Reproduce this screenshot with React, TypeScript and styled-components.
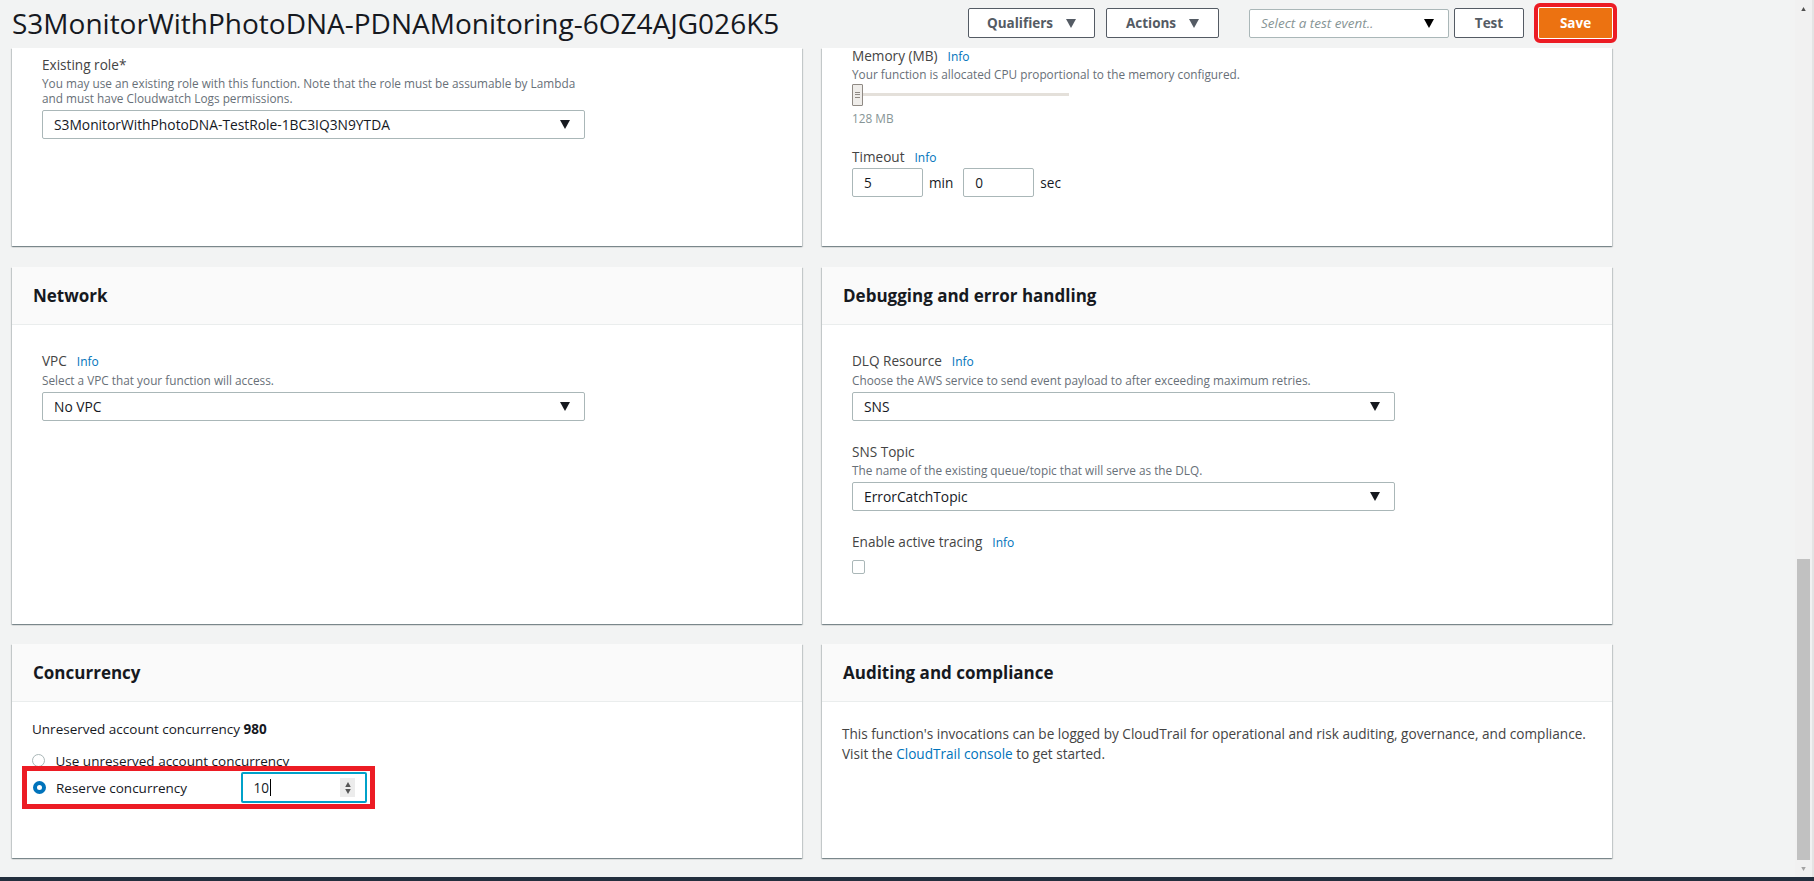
import React from "react";
import styled, { createGlobalStyle } from "styled-components";

const GlobalStyle = createGlobalStyle`
  html, body { margin: 0; padding: 0; }
  body {
    background: #f2f3f3;
    font-family: "Open Sans", "Noto Sans", "Liberation Sans", sans-serif;
    color: #16191f;
    overflow: hidden;
  }
  * { box-sizing: border-box; }
`;

/* ---------- frame ---------- */
const Frame = styled.div`
  width: 1814px;
  height: 881px;
  display: flex;
  flex-direction: column;
`;
const Viewport = styled.div`
  flex: 1;
  min-height: 0;
  display: flex;
`;
const Main = styled.main`
  flex: 1;
  display: flex;
  flex-direction: column;
  padding-left: 12px;
`;
const Footer = styled.div`
  height: 4px;
  background: #232f3e;
`;

/* ---------- scrollbar ---------- */
const Scrollbar = styled.div`
  width: 19px;
  display: flex;
  flex-direction: column;
  align-items: center;
  background: #f1f1f1;
  border-right: 2px solid #e4e4e4;
`;
const ScrollArrow = styled.div<{ $dim?: boolean }>`
  height: 17px;
  width: 100%;
  display: flex;
  align-items: center;
  justify-content: center;
  color: ${(p) => (p.$dim ? "#a3a3a3" : "#505050")};
`;
const ScrollTrack = styled.div`
  flex: 1;
  width: 100%;
  display: flex;
  flex-direction: column;
  align-items: center;
`;
const ScrollThumb = styled.div<{ $top: number; $h: number }>`
  margin-top: ${(p) => p.$top}px;
  height: ${(p) => p.$h}px;
  width: 13px;
  background: #c1c1c1;
`;

/* ---------- header ---------- */
const TopBar = styled.header`
  width: 1601px;
  height: 46px;
  margin-bottom: 2px;
  display: flex;
  align-items: center;
`;
const Title = styled.h1`
  flex: 1;
  margin: 0;
  font-size: 28px;
  line-height: 34px;
  font-weight: 400;
  color: #16191f;
  white-space: nowrap;
`;
const Toolbar = styled.div`
  display: flex;
  align-items: center;
`;
const Button = styled.button<{ $ml?: number; $w: number }>`
  margin-left: ${(p) => p.$ml ?? 0}px;
  width: ${(p) => p.$w}px;
  height: 30px;
  padding: 0;
  display: inline-flex;
  align-items: center;
  justify-content: center;
  background: #fff;
  border: 1px solid #545b64;
  border-radius: 2px;
  color: #545b64;
  font-family: inherit;
  font-size: 13.5px;
  font-weight: 700;
  cursor: pointer;
  svg { margin-left: 13px; }
`;
const SaveButton = styled.button`
  margin-left: 14px;
  width: 75px;
  height: 32px;
  background: #ec7211;
  border: 1px solid #fff;
  border-radius: 2px;
  color: #fff;
  font-family: inherit;
  font-size: 13.5px;
  font-weight: 700;
  outline: 4px solid #ec1c24;
  outline-offset: 0;
`;
const EventSelect = styled.div<{ $ml?: number }>`
  margin-left: ${(p) => p.$ml ?? 0}px;
  width: 200px;
  height: 29px;
  padding: 0 14px 0 11px;
  display: flex;
  align-items: center;
  justify-content: space-between;
  background: #fff;
  border: 1px solid #aab7b8;
  border-radius: 2px;
  font-size: 13.5px;
  font-style: italic;
  color: #879596;
  svg { color: #000; }
`;

/* ---------- cards ---------- */
const Grid = styled.div`
  display: grid;
  grid-template-columns: 790px 790px;
  grid-template-rows: 198px 357px 214px;
  column-gap: 20px;
  row-gap: 20.5px;
`;
const Card = styled.section`
  background: #fff;
  display: flex;
  flex-direction: column;
  box-shadow: 0 1px 1px 0 rgba(0, 28, 36, 0.3), 1px 1px 1px 0 rgba(0, 28, 36, 0.15),
    -1px 1px 1px 0 rgba(0, 28, 36, 0.15);
`;
const CardHeader = styled.div`
  height: 58px;
  padding: 0 20px 0 21px;
  display: flex;
  align-items: center;
  background: #fafafa;
  border-bottom: 1px solid #eaeded;
`;
const CardTitle = styled.h2`
  margin: 0;
  font-size: 17px;
  font-weight: 700;
  color: #16191f;
`;
const CardBody = styled.div<{ $pt: number }>`
  padding: ${(p) => p.$pt}px 20px 0 20px;
`;
const Fields = styled.div`
  padding-left: 10px;
`;
const Field = styled.div`
  & + & { margin-top: 23px; }
`;
const Label = styled.div`
  display: flex;
  align-items: baseline;
  font-size: 13.6px;
  line-height: 16px;
  color: #444;
`;
const Info = styled.a`
  margin-left: 10px;
  font-size: 12px;
  color: #0073bb;
  text-decoration: none;
`;
const Desc = styled.div<{ $mt?: number }>`
  margin-top: ${(p) => p.$mt ?? 3}px;
  font-size: 11.8px;
  line-height: 15px;
  color: #687078;
`;
const Select = styled.div`
  margin-top: 4px;
  width: 543px;
  height: 29px;
  padding: 0 14px 0 11px;
  display: flex;
  align-items: center;
  justify-content: space-between;
  background: #fff;
  border: 1px solid #aab7b8;
  border-radius: 2px;
  font-size: 13.8px;
  color: #16191f;
`;

/* memory slider */
const Slider = styled.div`
  margin-top: 2px;
  display: flex;
  align-items: center;
  width: 217px;
  height: 22px;
`;
const SliderHandle = styled.div`
  width: 11px;
  height: 22px;
  border: 1px solid #8f8a84;
  border-radius: 1px;
  background: #efedea;
  display: flex;
  flex-direction: column;
  justify-content: center;
  gap: 1.5px;
  padding-left: 2px;
  span {
    width: 5px;
    height: 1px;
    background: #8f8a84;
  }
`;
const SliderTrack = styled.div`
  flex: 1;
  height: 3.5px;
  background: #e4e0da;
`;
const SliderValue = styled.div`
  margin-top: 5px;
  font-size: 11.8px;
  line-height: 15px;
  color: #879596;
`;

/* timeout */
const InlineInputs = styled.div`
  margin-top: 2px;
  display: flex;
  align-items: center;
  font-size: 13.6px;
  color: #16191f;
`;
const SmallInput = styled.div`
  width: 71px;
  height: 29px;
  padding-left: 11px;
  display: flex;
  align-items: center;
  border: 1px solid #aab7b8;
  border-radius: 2px;
  background: #fff;
`;
const Unit = styled.span<{ $mr?: number }>`
  margin: 0 ${(p) => p.$mr ?? 0}px 0 6px;
`;

const Checkbox = styled.div`
  margin-top: 9px;
  width: 13px;
  height: 14px;
  border: 1px solid #aab7b8;
  border-radius: 2px;
  background: #fff;
`;

/* concurrency */
const BodyText = styled.p<{ $lh: number }>`
  margin: 0;
  font-size: 13.5px;
  line-height: ${(p) => p.$lh}px;
  color: #16191f;
  b { font-weight: 700; }
`;
const AuditText = styled(BodyText)`
  font-size: 13.6px;
  color: #444;
  white-space: nowrap;
`;
const Link = styled.a`
  color: #0073bb;
  text-decoration: none;
`;
const RadioGroup = styled.div`
  margin-top: 13.5px;
  display: flex;
  flex-direction: column;
  gap: 1px;
`;
const RadioRow = styled.div<{ $highlight?: boolean }>`
  display: flex;
  align-items: center;
  width: fit-content;
  ${(p) =>
    p.$highlight
      ? `
    margin-left: -5px;
    padding: 1.5px 2.5px 1px 5.5px;
    outline: 5px solid #ec1c24;
    background: #fff;
  `
      : "height: 18px;"}
`;
const Radio = styled.span<{ $checked?: boolean }>`
  width: 13px;
  height: 13px;
  border-radius: 50%;
  background: #fff;
  border: ${(p) => (p.$checked ? "4px solid #0073bb" : "1px solid #aab7b8")};
  flex: none;
`;
const RadioLabel = styled.span<{ $w?: number }>`
  margin-left: 10.5px;
  ${(p) => (p.$w ? `width: ${p.$w}px;` : "")}
  font-size: 13.5px;
  line-height: 18px;
  color: #16191f;
  white-space: nowrap;
`;
const NumberField = styled.div`
  width: 126px;
  height: 31px;
  padding: 0 10px 0 10.5px;
  display: flex;
  align-items: center;
  border: 2px solid #00a1c9;
  border-radius: 2px;
  background: #fff;
  font-size: 13.6px;
  color: #16191f;
`;
const Caret = styled.span`
  width: 1px;
  height: 17px;
  margin-left: 0.5px;
  background: #000;
`;
const Spinner = styled.span`
  margin-left: auto;
  width: 15px;
  height: 19px;
  background: #ececec;
  display: flex;
  flex-direction: column;
  align-items: center;
  justify-content: center;
  gap: 2px;
  color: #555;
`;

/* ---------- icons ---------- */
const Tri = ({ w = 10, h = 9, up = false }: { w?: number; h?: number; up?: boolean }) => (
  <svg width={w} height={h} viewBox="0 0 10 9" aria-hidden="true">
    <path d={up ? "M5 0L10 9H0z" : "M0 0h10L5 9z"} fill="currentColor" />
  </svg>
);

/* ---------- page ---------- */
function FieldLabel({ text, info }: { text: string; info?: boolean }) {
  return (
    <Label>
      {text}
      {info && <Info href="#">Info</Info>}
    </Label>
  );
}

function Dropdown({ value }: { value: string }) {
  return (
    <Select>
      <span>{value}</span>
      <Tri />
    </Select>
  );
}

export default function App() {
  return (
    <Frame>
      <GlobalStyle />
      <Viewport>
        <Main>
          <TopBar>
            <Title>S3MonitorWithPhotoDNA-PDNAMonitoring-6OZ4AJG026K5</Title>
            <Toolbar>
              <Button $w={127}>
                Qualifiers
                <Tri />
              </Button>
              <Button $ml={11} $w={113}>
                Actions
                <Tri />
              </Button>
              <EventSelect $ml={30}>
                <span>Select a test event..</span>
                <Tri />
              </EventSelect>
              <Button $ml={5} $w={70}>
                Test
              </Button>
              <SaveButton>Save</SaveButton>
            </Toolbar>
          </TopBar>

          <Grid>
            <Card>
              <CardBody $pt={9}>
                <Fields>
                  <Field>
                    <FieldLabel text="Existing role*" />
                    <Desc>
                      You may use an existing role with this function. Note that the role must be assumable by Lambda
                      <br />
                      and must have Cloudwatch Logs permissions.
                    </Desc>
                    <Dropdown value="S3MonitorWithPhotoDNA-TestRole-1BC3IQ3N9YTDA" />
                  </Field>
                </Fields>
              </CardBody>
            </Card>

            <Card>
              <CardBody $pt={0}>
                <Fields>
                  <Field>
                    <FieldLabel text="Memory (MB)" info />
                    <Desc $mt={1.5}>Your function is allocated CPU proportional to the memory configured.</Desc>
                    <Slider>
                      <SliderHandle>
                        <span />
                        <span />
                        <span />
                      </SliderHandle>
                      <SliderTrack />
                    </Slider>
                    <SliderValue>128 MB</SliderValue>
                  </Field>
                  <Field>
                    <FieldLabel text="Timeout" info />
                    <InlineInputs>
                      <SmallInput>5</SmallInput>
                      <Unit $mr={10}>min</Unit>
                      <SmallInput>0</SmallInput>
                      <Unit>sec</Unit>
                    </InlineInputs>
                  </Field>
                </Fields>
              </CardBody>
            </Card>

            <Card>
              <CardHeader>
                <CardTitle>Network</CardTitle>
              </CardHeader>
              <CardBody $pt={28}>
                <Fields>
                  <Field>
                    <FieldLabel text="VPC" info />
                    <Desc>Select a VPC that your function will access.</Desc>
                    <Dropdown value="No VPC" />
                  </Field>
                </Fields>
              </CardBody>
            </Card>

            <Card>
              <CardHeader>
                <CardTitle>Debugging and error handling</CardTitle>
              </CardHeader>
              <CardBody $pt={28}>
                <Fields>
                  <Field>
                    <FieldLabel text="DLQ Resource" info />
                    <Desc>Choose the AWS service to send event payload to after exceeding maximum retries.</Desc>
                    <Dropdown value="SNS" />
                  </Field>
                  <Field>
                    <FieldLabel text="SNS Topic" />
                    <Desc>The name of the existing queue/topic that will serve as the DLQ.</Desc>
                    <Dropdown value="ErrorCatchTopic" />
                  </Field>
                  <Field>
                    <FieldLabel text="Enable active tracing" info />
                    <Checkbox />
                  </Field>
                </Fields>
              </CardBody>
            </Card>

            <Card>
              <CardHeader>
                <CardTitle>Concurrency</CardTitle>
              </CardHeader>
              <CardBody $pt={18}>
                <BodyText $lh={18}>
                  Unreserved account concurrency <b>980</b>
                </BodyText>
                <RadioGroup>
                  <RadioRow>
                    <Radio />
                    <RadioLabel>Use unreserved account concurrency</RadioLabel>
                  </RadioRow>
                  <RadioRow $highlight>
                    <Radio $checked />
                    <RadioLabel $w={185}>Reserve concurrency</RadioLabel>
                    <NumberField>
                      10
                      <Caret />
                      <Spinner>
                        <Tri w={6} h={5} up />
                        <Tri w={6} h={5} />
                      </Spinner>
                    </NumberField>
                  </RadioRow>
                </RadioGroup>
              </CardBody>
            </Card>

            <Card>
              <CardHeader>
                <CardTitle>Auditing and compliance</CardTitle>
              </CardHeader>
              <CardBody $pt={22}>
                <AuditText $lh={20}>
                  This function's invocations can be logged by CloudTrail for operational and risk auditing, governance, and
                  compliance.
                  <br />
                  Visit the <Link href="#">CloudTrail console</Link> to get started.
                </AuditText>
              </CardBody>
            </Card>
          </Grid>
        </Main>

        <Scrollbar>
          <ScrollArrow>
            <Tri w={7} h={4} up />
          </ScrollArrow>
          <ScrollTrack>
            <ScrollThumb $top={542} $h={301} />
          </ScrollTrack>
          <ScrollArrow $dim>
            <Tri w={7} h={4} />
          </ScrollArrow>
        </Scrollbar>
      </Viewport>
      <Footer />
    </Frame>
  );
}
